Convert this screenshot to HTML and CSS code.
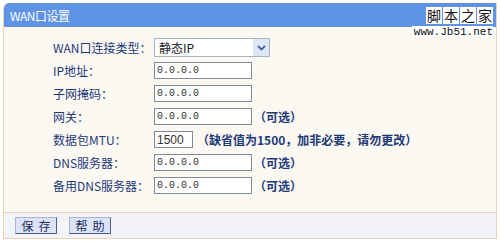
FILE: index.html
```html
<!DOCTYPE html>
<html lang="zh-CN">
<head>
    <meta charset="UTF-8">
    <title>WAN口设置</title>
    <link rel="stylesheet" href="styles.css">
</head>
<body>

    <div class="panel">
        <div class="panel-head">
            <span class="panel-title">WAN口设置</span>
            <div class="mark">
                <div class="mark-chars"><span>脚</span><span>本</span><span>之</span><span>家</span></div>
                <div class="mark-url">www.Jb51.net</div>
            </div>
        </div>

        <div class="panel-body">
            <div class="row">
                <label>WAN口连接类型：</label>
                <div class="select">
                    <span class="select-text">静态IP</span>
                    <span class="select-btn">
                        <svg width="9" height="6" viewBox="0 0 9 6"><path d="M1 1 L4.5 4.5 L8 1" fill="none" stroke="#3f63b8" stroke-width="1.8"/></svg>
                    </span>
                </div>
            </div>
            <div class="row">
                <label>IP地址：</label>
                <input class="ip" type="text" value="0.0.0.0">
            </div>
            <div class="row">
                <label>子网掩码：</label>
                <input class="ip" type="text" value="0.0.0.0">
            </div>
            <div class="row">
                <label>网关：</label>
                <input class="ip" type="text" value="0.0.0.0">
                <span class="hint">（可选）</span>
            </div>
            <div class="row">
                <label>数据包MTU：</label>
                <input class="mtu" type="text" value="1500">
                <span class="hint">（缺省值为1500，加非必要，请勿更改）</span>
            </div>
            <div class="row">
                <label>DNS服务器：</label>
                <input class="ip" type="text" value="0.0.0.0">
                <span class="hint">（可选）</span>
            </div>
            <div class="row">
                <label>备用DNS服务器：</label>
                <input class="ip" type="text" value="0.0.0.0">
                <span class="hint">（可选）</span>
            </div>
        </div>

        <div class="panel-foot">
            <button>保存</button>
            <button>帮助</button>
        </div>
    </div>

</body>
</html>
```

FILE: styles.css
```css
body {
    margin: 0;
    background-color: #fff;
    font-family: "Noto Sans CJK SC", "Liberation Sans", sans-serif;
    font-size: 12px;
}
.panel {
    margin: 3px 3px 3px 3px;
    border: 1px solid #ead2b4;
    border-top: none;
    border-radius: 6px 0 0 0;
    overflow: hidden;
}
.panel-head {
    height: 24px;
    background-color: #5f93e6;
    display: flex;
    align-items: center;
    padding-left: 6px;
    position: relative;
}
.panel-title {
    color: #fff;
    font-size: 12px;
    letter-spacing: -0.5px;
}
.mark {
    position: absolute;
    right: 3px;
    top: 4px;
    z-index: 2;
}
.mark-chars {
    display: flex;
    gap: 1px;
    justify-content: flex-end;
}
.mark-chars span {
    background-color: #fff;
    color: #111;
    width: 16px;
    height: 17px;
    font-size: 14px;
    line-height: 17px;
    text-align: center;
}
.mark-url {
    background-color: #fff;
    color: #111;
    font-family: "Liberation Mono", monospace;
    font-size: 11px;
    line-height: 10px;
    padding: 1px 0 0 2px;
    margin-top: 2px;
}
.panel-body {
    background-color: #fcf8f2;
    padding: 9px 0 15px 49px;
    border-bottom: 1px solid #ead2b4;
}
.row {
    display: flex;
    align-items: center;
    height: 23px;
    white-space: nowrap;
}
.row label {
    flex: 0 0 101px;
    color: #1c3a7a;
    font-size: 12px;
}
.row input {
    box-sizing: border-box;
    flex: none;
    height: 17px;
    border: 1px solid #7f8b99;
    background-color: #fff;
    color: #333;
    padding: 0 2px;
    margin: 0;
    font-family: "Liberation Mono", monospace;
    font-size: 10px;
}
.row .ip {
    width: 98px;
}
.row .mtu {
    width: 39px;
    font-family: "Liberation Sans", sans-serif;
    font-size: 12px;
}
.hint {
    color: #1c3a7a;
    font-size: 12px;
    margin-left: 2px;
    font-weight: bold;
}
.row .mtu + .hint {
    margin-left: 4px;
}
.select {
    box-sizing: border-box;
    flex: none;
    width: 116px;
    height: 19px;
    border: 1px solid #a7b3c2;
    background-color: #fff;
    display: flex;
    align-items: center;
    justify-content: space-between;
    padding-left: 4px;
}
.select-text {
    color: #222;
    font-size: 12px;
}
.select-btn {
    width: 16px;
    height: 17px;
    background-color: #dfe6f4;
    display: flex;
    align-items: center;
    justify-content: center;
}
.panel-foot {
    background-color: #f3f4f8;
    height: 25px;
    display: flex;
    align-items: center;
    gap: 12px;
    padding-left: 11px;
}
.panel-foot button {
    height: 17px;
    width: 42px;
    padding: 0 0 0 5px;
    background-color: #dce3f6;
    border: 1px solid #4e5f8e;
    border-top-color: #a9b5d6;
    border-left-color: #a9b5d6;
    color: #1b2d60;
    font-family: "Noto Sans CJK SC", sans-serif;
    font-size: 12px;
    line-height: 15px;
    letter-spacing: 5px;
}
```
